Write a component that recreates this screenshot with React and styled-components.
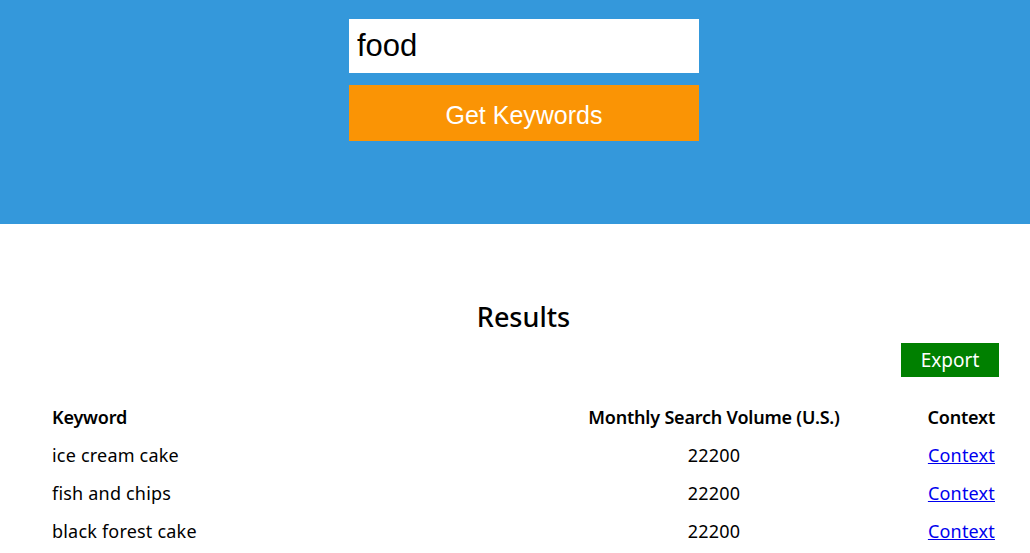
import React, { useState } from "react";
import styled, { createGlobalStyle } from "styled-components";

const GlobalStyle = createGlobalStyle`
  body {
    margin: 0;
    font-family: "Noto Sans", "Open Sans", sans-serif;
    color: #000;
    background: #fff;
  }
`;

const Header = styled.header`
  background-color: #3498db;
  height: 224px;
  display: flex;
  flex-direction: column;
  align-items: center;
  padding: 19px 0 0 18px;
  box-sizing: border-box;
`;

const SearchForm = styled.form`
  width: 350px;
  display: flex;
  flex-direction: column;
  gap: 12px;
`;

const SearchInput = styled.input`
  height: 54px;
  border: none;
  padding: 0 8px;
  font-family: "Liberation Sans", Arial, sans-serif;
  font-size: 31px;
  color: #000;
  box-sizing: border-box;
  outline: none;
`;

const SubmitButton = styled.button`
  height: 56px;
  border: none;
  padding: 4px 0 0;
  background-color: #fa9405;
  color: #fff;
  font-family: "Liberation Sans", Arial, sans-serif;
  font-size: 25px;
  cursor: pointer;
`;

const ResultsSection = styled.section`
  padding: 75px 35px 0 52px;
`;

const Title = styled.h2`
  margin: 0;
  text-align: center;
  font-size: 27px;
  font-weight: 500;
  line-height: 36px;
`;

const ExportRow = styled.div`
  display: flex;
  justify-content: flex-end;
  margin-right: -4px;
  margin-top: 8px;
`;

const ExportButton = styled.button`
  width: 98px;
  height: 34px;
  border: none;
  background-color: #008000;
  color: #fff;
  font-family: inherit;
  font-size: 19px;
  cursor: pointer;
`;

const Table = styled.div`
  margin-top: 21px;
  display: grid;
  grid-template-columns: 1fr 252px 155px;
  grid-auto-rows: 38px;
  align-items: center;
  font-size: 18px;
`;

const Cell = styled.div`
  text-align: ${(p) => p.$align || "left"};
  font-weight: ${(p) => (p.$head ? 600 : 400)};
  white-space: nowrap;
  letter-spacing: ${(p) => (p.$head ? "-0.2px" : "0.2px")};
`;

const ContextLink = styled.a`
  color: #0000ee;
  text-decoration: underline;
`;

const rows = [
  { keyword: "ice cream cake", volume: 22200 },
  { keyword: "fish and chips", volume: 22200 },
  { keyword: "black forest cake", volume: 22200 },
];

export default function App() {
  const [query, setQuery] = useState("food");

  return (
    <>
      <GlobalStyle />
      <Header>
        <SearchForm onSubmit={(e) => e.preventDefault()}>
          <SearchInput value={query} onChange={(e) => setQuery(e.target.value)} />
          <SubmitButton type="submit">Get Keywords</SubmitButton>
        </SearchForm>
      </Header>
      <ResultsSection>
        <Title>Results</Title>
        <ExportRow>
          <ExportButton>Export</ExportButton>
        </ExportRow>
        <Table>
          <Cell $head>Keyword</Cell>
          <Cell $head $align="center">Monthly Search Volume (U.S.)</Cell>
          <Cell $head $align="right">Context</Cell>
          {rows.map((r) => (
            <React.Fragment key={r.keyword}>
              <Cell>{r.keyword}</Cell>
              <Cell $align="center">{r.volume}</Cell>
              <Cell $align="right">
                <ContextLink href="#">Context</ContextLink>
              </Cell>
            </React.Fragment>
          ))}
        </Table>
      </ResultsSection>
    </>
  );
}
